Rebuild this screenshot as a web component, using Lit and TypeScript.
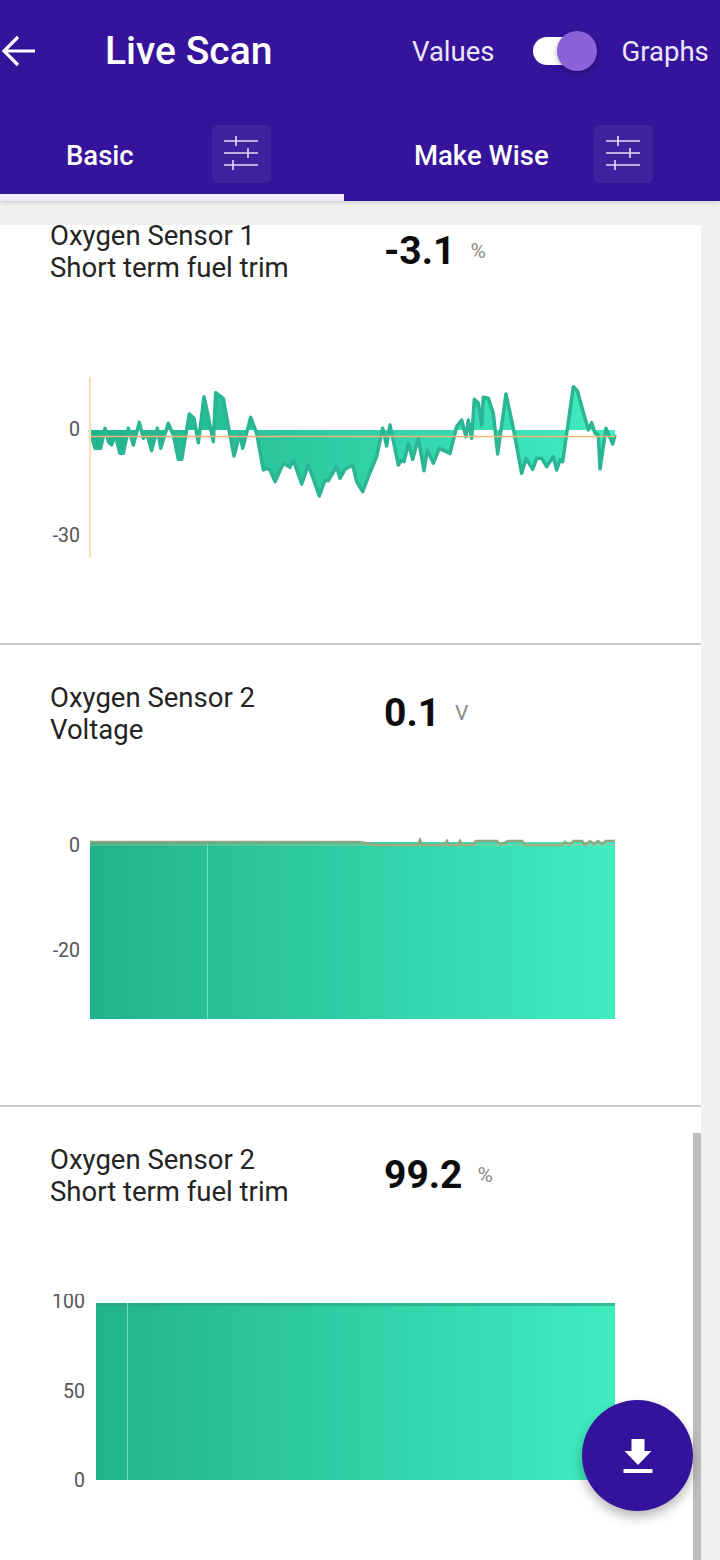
import { LitElement, html, css, svg } from "lit";
import { customElement, property } from "lit/decorators.js";

type Pt = [number, number];

// traced from the trace of the first graph, x/y are in chart space (0-700, 0-200)
const trimLeft: Pt[] = [
  [150, 180], [165, 235], [182, 235], [195, 175], [205, 215], [215, 225], [225, 195], [240, 250],
  [250, 250], [265, 175], [280, 225], [298, 157], [310, 205], [320, 190], [335, 242], [352, 175],
  [362, 235], [385, 160], [400, 195], [415, 268], [425, 268], [448, 132], [462, 145], [475, 218],
  [492, 80], [505, 140], [520, 215], [527, 68], [550, 85], [565, 170], [582, 258], [600, 190],
  [608, 235], [632, 142], [650, 190], [670, 300], [680, 295], [690, 300], [705, 335], [730, 280],
  [750, 292], [760, 270], [785, 342], [805, 285], [838, 378], [855, 330], [865, 332], [890, 290],
];
const trimRight: Pt[] = [
  [0, 325], [15, 298], [38, 285], [50, 335], [68, 365], [85, 320], [110, 260], [128, 175],
  [140, 228], [150, 165], [175, 285], [185, 270], [192, 275], [205, 220], [218, 268], [235, 205],
  [252, 302], [262, 240], [280, 280], [298, 235], [330, 250], [350, 170], [365, 150], [378, 200],
  [385, 150], [395, 205], [403, 88], [415, 100], [425, 165], [430, 82], [445, 85], [460, 130],
  [473, 252], [498, 72], [520, 175], [545, 310], [558, 265], [578, 298], [590, 265], [605, 265],
  [620, 290], [640, 260], [650, 300], [660, 270], [668, 275], [700, 50], [712, 62], [745, 180],
  [755, 158], [765, 190], [775, 195], [780, 297], [798, 175], [818, 222], [825, 195],
];
const trimTrace: Pt[] = [
  ...trimLeft.map(([x, y]): Pt => [40 + x / 3, y / 3]),
  ...trimRight.map(([x, y]): Pt => [340 + x / 3, y / 3]),
];

const voltTrace: Pt[] = [
  [90, 10], [360, 10], [375, 13], [418, 13], [420, 8], [422, 13], [445, 13], [447, 9], [449, 13],
  [458, 13], [460, 9], [462, 13], [473, 13], [476, 9], [497, 9], [500, 13], [508, 9], [522, 9],
  [525, 13], [562, 13], [565, 10], [569, 13], [574, 9], [582, 9], [585, 13], [590, 9], [594, 12],
  [598, 9], [602, 12], [606, 9], [615, 9],
];

const pts = (t: Pt[]) => t.map(([x, y]) => `${x},${y}`).join(" ");

@customElement("sensor-card")
export class SensorCard extends LitElement {
  @property() line1 = "";
  @property() line2 = "";
  @property() value = "";
  @property() unit = "";
  @property() kind = "trim";

  static styles = css`
    :host {
      display: block;
      height: 460px;
      background: #fff;
      border-bottom: 2px solid #c9c9c9;
      font-family: Roboto, sans-serif;
    }
    .top {
      display: flex;
      height: 187px;
      padding: 36px 0 0 50px;
      box-sizing: border-box;
    }
    .name {
      width: 334px;
      padding-top: 1px;
      font-size: 27.5px;
      line-height: 32px;
      color: #242424;
    }
    .reading {
      display: flex;
      align-items: center;
      gap: 15px;
      height: 64px;
    }
    .value {
      font-size: 39px;
      font-weight: 700;
      color: #0c0c0c;
    }
    .unit {
      font-size: 21px;
      color: #8c8c8c;
    }
    svg {
      display: block;
    }
    text {
      font-family: Roboto, sans-serif;
      font-size: 19.5px;
      fill: #555;
      text-anchor: end;
    }
  `;

  chart() {
    if (this.kind === "trim") {
      const t = trimTrace;
      const area = `90,60 ${pts(t)} ${t[t.length - 1][0]},60`;
      return svg`
        <polygon points=${area} fill="url(#fade)" />
        <polyline points=${pts(t)} fill="none" stroke="#2ab594" stroke-width="3.5" stroke-linejoin="round" />
        <line x1="90" x2="615" y1="66.5" y2="66.5" stroke="#f6b76c" stroke-width="1.5" />
        <line x1="90" x2="90" y1="7" y2="188" stroke="#fde0b8" stroke-width="2" />
        <text x="80" y="66">0</text>
        <text x="80" y="172">-30</text>
      `;
    }
    if (this.kind === "volt") {
      return svg`
        <rect x="90" y="10" width="525" height="177" fill="url(#fade)" />
        <line x1="207.5" x2="207.5" y1="10" y2="187" stroke="#6fdcbd" stroke-width="1" />
        <polyline points=${pts(voltTrace)} fill="none" stroke="#8fa67c" stroke-width="2.5" />
        <line x1="90" x2="615" y1="13" y2="13" stroke="#e6b684" stroke-width="1" opacity=".6" />
        <text x="80" y="20">0</text>
        <text x="80" y="125">-20</text>
      `;
    }
    return svg`
      <rect x="96" y="9" width="519" height="177" fill="url(#fade)" />
      <rect x="96" y="9" width="519" height="3" fill="#2a9f80" opacity=".6" />
      <line x1="127.5" x2="127.5" y1="9" y2="186" stroke="#6fdcbd" stroke-width="1" />
      <text x="85" y="14">100</text>
      <text x="85" y="104">50</text>
      <text x="85" y="193">0</text>
    `;
  }

  render() {
    return html`
      <div class="top">
        <div class="name">${this.line1}<br />${this.line2}</div>
        <div class="reading">
          <span class="value">${this.value}</span>
          <span class="unit">${this.unit}</span>
        </div>
      </div>
      <svg width="700" height="200" viewBox="0 0 700 200">
        <defs>
          <linearGradient id="fade" gradientUnits="userSpaceOnUse" x1="90" x2="615" y1="0" y2="0">
            <stop offset="0" stop-color="#20b28d" />
            <stop offset="1" stop-color="#40ecc0" />
          </linearGradient>
        </defs>
        ${this.chart()}
      </svg>
    `;
  }
}

@customElement("app-root")
export class AppRoot extends LitElement {
  static styles = css`
    :host {
      display: block;
      position: relative;
      width: 720px;
      height: 1560px;
      overflow: hidden;
      background: #f0f0f0;
      font-family: Roboto, sans-serif;
    }
    header {
      height: 201px;
      background: #36139b;
      color: #fff;
      box-shadow: 0 2px 4px rgba(0, 0, 0, 0.12);
      position: relative;
    }
    .bar {
      display: flex;
      align-items: center;
      height: 102px;
    }
    .back {
      margin-left: 2px;
      width: 33px;
      height: 32px;
    }
    h1 {
      margin: 0 0 0 70px;
      width: 307px;
      font-size: 39px;
      font-weight: 500;
      white-space: nowrap;
    }
    .mode {
      font-size: 27.5px;
      color: #ece6f8;
    }
    .toggle {
      position: relative;
      width: 46px;
      height: 28px;
      margin: 0 42px 0 39px;
      border-radius: 14px;
      background: #fff;
    }
    .toggle i {
      position: absolute;
      left: 24px;
      top: -6px;
      width: 40px;
      height: 40px;
      border-radius: 50%;
      background: #8c62d9;
      box-shadow: 0 2px 4px rgba(0, 0, 0, 0.35);
    }
    .tabs {
      display: flex;
      height: 99px;
    }
    .tab {
      display: flex;
      align-items: flex-start;
      width: 344px;
      box-sizing: border-box;
      height: 99px;
      padding-top: 23px;
      font-size: 27.5px;
      font-weight: 500;
    }
    .tab.on {
      border-bottom: 7px solid #f1e9fb;
      padding-left: 66px;
    }
    .tab.off {
      width: 376px;
      padding-left: 70px;
    }
    .tab span {
      width: 146px;
      line-height: 62px;
    }
    .tab.off span {
      width: 180px;
    }
    .tile {
      width: 59px;
      height: 58px;
      border-radius: 6px;
      background: #40229f;
    }
    .tile svg {
      display: block;
    }
    .list {
      position: absolute;
      left: 0;
      top: 225px;
      width: 701px;
      height: 1335px;
      overflow: hidden;
    }
    .rows {
      margin-top: -42px;
    }
    .thumb {
      position: absolute;
      left: 693px;
      top: 1133px;
      width: 8px;
      height: 427px;
      background: #bdbdbd;
    }
    .fab {
      position: absolute;
      left: 582px;
      top: 1400px;
      width: 111px;
      height: 111px;
      border-radius: 50%;
      background: #35129b;
      box-shadow: 0 6px 12px rgba(0, 0, 0, 0.28);
      display: flex;
      align-items: center;
      justify-content: center;
    }
  `;

  sliders() {
    return html`<div class="tile">
      <svg width="59" height="58" viewBox="0 0 59 58" fill="none" stroke="#e4dcf5" stroke-width="1.6">
        <path d="M12 16h34M12 28h34M12 40h34" />
        <path d="M24 11v10M36 23v10M21 35v10" />
      </svg>
    </div>`;
  }

  render() {
    return html`
      <header>
        <div class="bar">
          <svg class="back" viewBox="0 0 33 32" fill="none" stroke="#fff" stroke-width="3.2">
            <path d="M33 16H3M16 2L2 16l14 14" />
          </svg>
          <h1>Live Scan</h1>
          <span class="mode">Values</span>
          <div class="toggle"><i></i></div>
          <span class="mode">Graphs</span>
        </div>
        <div class="tabs">
          <div class="tab on"><span>Basic</span>${this.sliders()}</div>
          <div class="tab off"><span>Make Wise</span>${this.sliders()}</div>
        </div>
      </header>
      <div class="list">
        <div class="rows">
          <sensor-card line1="Oxygen Sensor 1" line2="Short term fuel trim" value="-3.1" unit="%" kind="trim"></sensor-card>
          <sensor-card line1="Oxygen Sensor 2" line2="Voltage" value="0.1" unit="V" kind="volt"></sensor-card>
          <sensor-card line1="Oxygen Sensor 2" line2="Short term fuel trim" value="99.2" unit="%" kind="full"></sensor-card>
        </div>
      </div>
      <div class="thumb"></div>
      <div class="fab">
        <svg width="30" height="36" viewBox="0 0 30 36" fill="#fff">
          <path d="M8.500 1h13v12h7L15 27 1.500 13h7z" />
          <rect x="0.500" y="31" width="29" height="4" />
        </svg>
      </div>
    `;
  }
}
